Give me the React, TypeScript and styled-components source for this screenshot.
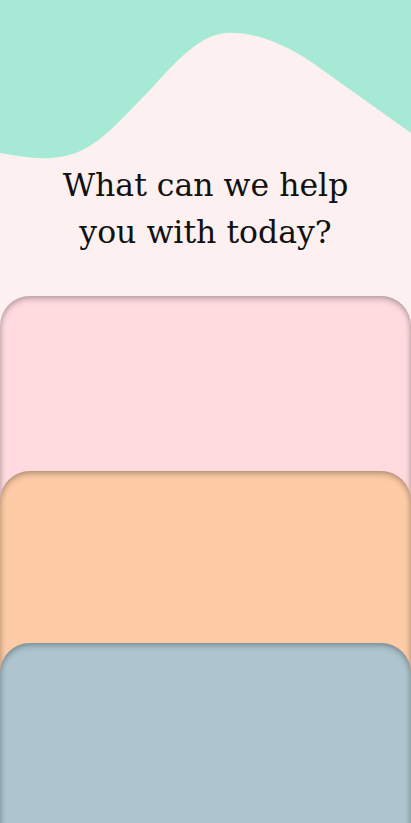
import React from "react";
import styled, { createGlobalStyle } from "styled-components";

const GlobalStyle = createGlobalStyle`
  html, body {
    margin: 0;
    padding: 0;
    background: #fcf0f0;
  }
  body {
    font-family: "DejaVu Serif", "Liberation Serif", serif;
    overflow: hidden;
  }
`;

const Page = styled.div`
  width: 411px;
  height: 823px;
  overflow: hidden;
  display: flex;
  flex-direction: column;
  background: #fcf0f0;
`;

const Wave = styled.svg`
  display: block;
  width: 411px;
  height: 162px;
  flex-shrink: 0;
`;

const Title = styled.h1`
  margin: 0;
  font-family: "DejaVu Serif", "Liberation Serif", serif;
  font-weight: 400;
  font-size: 31.5px;
  line-height: 47px;
  color: #111;
  text-align: center;
`;

const CardStack = styled.div`
  display: flex;
  flex-direction: column;
  margin-top: 40px;
`;

const Card = styled.div<{ $bg: string; $overlap: number }>`
  height: 220px;
  flex-shrink: 0;
  margin-top: ${(p) => -p.$overlap}px;
  background: ${(p) => p.$bg};
  border-radius: 30px 30px 0 0;
  box-shadow: inset 0 3px 6px rgba(0, 0, 0, 0.24),
    inset 2px 0 4px rgba(0, 0, 0, 0.08), inset -2px 0 4px rgba(0, 0, 0, 0.08);
`;

const cards = [
  { bg: "#ffdbe0", overlap: 0 },
  { bg: "#fdcba5", overlap: 45 },
  { bg: "#aec5cf", overlap: 48 },
];

export default function App() {
  return (
    <>
      <GlobalStyle />
      <Page>
        <Wave viewBox="0 0 411 162" preserveAspectRatio="none">
          <path
            d="M0,153 C25,157 40,160 60,157 C95,152 115,125 150,90 C175,62 200,35 225,33 C255,31 285,45 310,61 L411,133 L411,0 L0,0 Z"
            fill="#a6e9d5"
          />
        </Wave>
        <Title>
          What can we help
          <br />
          you with today?
        </Title>
        <CardStack>
          {cards.map((c, i) => (
            <Card key={i} $bg={c.bg} $overlap={c.overlap} />
          ))}
        </CardStack>
      </Page>
    </>
  );
}
